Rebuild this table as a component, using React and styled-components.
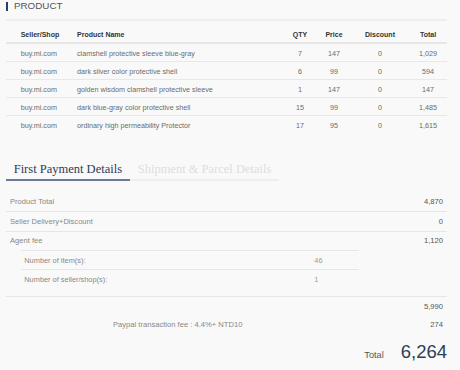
import React from "react";
import styled, { createGlobalStyle } from "styled-components";

const Global = createGlobalStyle`
  html, body { margin: 0; padding: 0; background: #f9f9f9; }
  body { font-family: "Liberation Sans", Arial, sans-serif; }
`;

const Page = styled.div`
  width: 460px;
  height: 370px;
  overflow: hidden;
  padding: 0 13px 0 6px;
  box-sizing: border-box;
  background: #f9f9f9;
`;

const TitleRow = styled.div`
  display: flex;
  align-items: flex-start;
  gap: 6px;
  height: 19px;
`;

const TitleBar = styled.span`
  width: 2px;
  height: 9px;
  margin-top: 2px;
  background: #2c3e66;
`;

const TitleText = styled.span`
  font-size: 9.8px;
  line-height: 11px;
  color: #555;
`;

const Table = styled.div`
  border-top: 2px solid #eeeeee;
  display: grid;
  grid-template-columns: 71px 206px 34px 34px 58px 38px;
`;

const Row = styled.div`
  display: contents;
`;

const Cell = styled.div`
  font-size: ${(p) => (p.$head ? "7px" : "7.2px")};
  font-weight: ${(p) => (p.$head ? 700 : 400)};
  color: ${(p) => (p.$head ? "#333" : "#6b6b6b")};
  text-align: ${(p) => (p.$center ? "center" : "left")};
  padding-left: ${(p) => (p.$first ? "14.7px" : "0")};
  white-space: nowrap;
  line-height: 9px;
  ${(p) =>
    p.$head
      ? `padding-top: 9px; padding-bottom: 3px; border-bottom: 2px solid #e6e6e6;`
      : `padding-top: 4.5px; padding-bottom: 3.5px; ${
          p.$last ? "" : "border-bottom: 1px solid #e8e8e8;"
        }`}
`;

const Tabs = styled.div`
  display: flex;
  margin-top: 29px;
`;

const Tab = styled.div`
  font-family: "Liberation Serif", "Times New Roman", serif;
  font-size: 12.5px;
  line-height: 15px;
  padding: 0 8px 1.5px 7.7px;
  color: ${(p) => (p.$active ? "#2c3b5c" : "#dedede")};
  border-bottom: 2px solid ${(p) => (p.$active ? "#6b7a99" : "#eeeeee")};
`;

const Summary = styled.div`
  margin-top: 12px;
`;

const SumRow = styled.div`
  display: flex;
  justify-content: space-between;
  align-items: center;
  height: 18.5px;
  padding: 0 4px;
  font-size: 7.6px;
  ${(p) => (p.$line ? "border-bottom: 1px solid #e6e6e6;" : "")}
`;

const Label = styled.span`
  color: #888;
  padding-left: ${(p) => p.$indent || 0}px;
`;

const Value = styled.span`
  color: #555;
`;

const SubBox = styled.div`
  margin: 0 88px 0 14.7px;
  border-top: 1px solid #e6e6e6;
`;

const SubRow = styled.div`
  display: grid;
  grid-template-columns: 290px 1fr;
  align-items: center;
  height: 18px;
  padding-left: 3.6px;
  font-size: 7.4px;
  color: #888;
  ${(p) => (p.$line ? "border-bottom: 1px solid #e6e6e6;" : "")}
`;

const SubValue = styled.span`
  color: #999;
`;

const Divider = styled.div`
  margin-top: 8px;
  border-top: 1px solid #e6e6e6;
`;

const TotalRow = styled.div`
  display: flex;
  justify-content: flex-end;
  align-items: baseline;
  gap: 17px;
  margin-top: 7px;
`;

const TotalLabel = styled.span`
  font-size: 9.2px;
  color: #555;
`;

const TotalValue = styled.span`
  font-size: 18.5px;
  color: #2c3e5a;
  line-height: 22px;
`;

const rows = [
  ["buy.mi.com", "clamshell protective sleeve blue-gray", "7", "147", "0", "1,029"],
  ["buy.mi.com", "dark silver color protective shell", "6", "99", "0", "594"],
  ["buy.mi.com", "golden wisdom clamshell protective sleeve", "1", "147", "0", "147"],
  ["buy.mi.com", "dark blue-gray color protective shell", "15", "99", "0", "1,485"],
  ["buy.mi.com", "ordinary high permeability Protector", "17", "95", "0", "1,615"],
];

const heads = ["Seller/Shop", "Product Name", "QTY", "Price", "Discount", "Total"];

export default function App() {
  return (
    <>
      <Global />
      <Page>
        <TitleRow>
          <TitleBar />
          <TitleText>PRODUCT</TitleText>
        </TitleRow>
        <Table>
          <Row>
            {heads.map((h, i) => (
              <Cell key={h} $head $first={i === 0} $center={i > 1}>
                {h}
              </Cell>
            ))}
          </Row>
          {rows.map((r, ri) => (
            <Row key={ri}>
              {r.map((c, i) => (
                <Cell
                  key={i}
                  $first={i === 0}
                  $center={i > 1}
                  $last={ri === rows.length - 1}
                >
                  {c}
                </Cell>
              ))}
            </Row>
          ))}
        </Table>
        <Tabs>
          <Tab $active>First Payment Details</Tab>
          <Tab>Shipment &amp; Parcel Details</Tab>
        </Tabs>
        <Summary>
          <SumRow $line>
            <Label>Product Total</Label>
            <Value>4,870</Value>
          </SumRow>
          <SumRow $line>
            <Label>Seller Delivery+Discount</Label>
            <Value>0</Value>
          </SumRow>
          <SumRow>
            <Label>Agent fee</Label>
            <Value>1,120</Value>
          </SumRow>
          <SubBox>
            <SubRow $line>
              <span>Number of item(s):</span>
              <SubValue>46</SubValue>
            </SubRow>
            <SubRow>
              <span>Number of seller/shop(s):</span>
              <SubValue>1</SubValue>
            </SubRow>
          </SubBox>
          <Divider />
          <SumRow>
            <Label />
            <Value>5,990</Value>
          </SumRow>
          <SumRow>
            <Label $indent={103}>Paypal transaction fee : 4.4%+ NTD10</Label>
            <Value>274</Value>
          </SumRow>
          <TotalRow>
            <TotalLabel>Total</TotalLabel>
            <TotalValue>6,264</TotalValue>
          </TotalRow>
        </Summary>
      </Page>
    </>
  );
}
